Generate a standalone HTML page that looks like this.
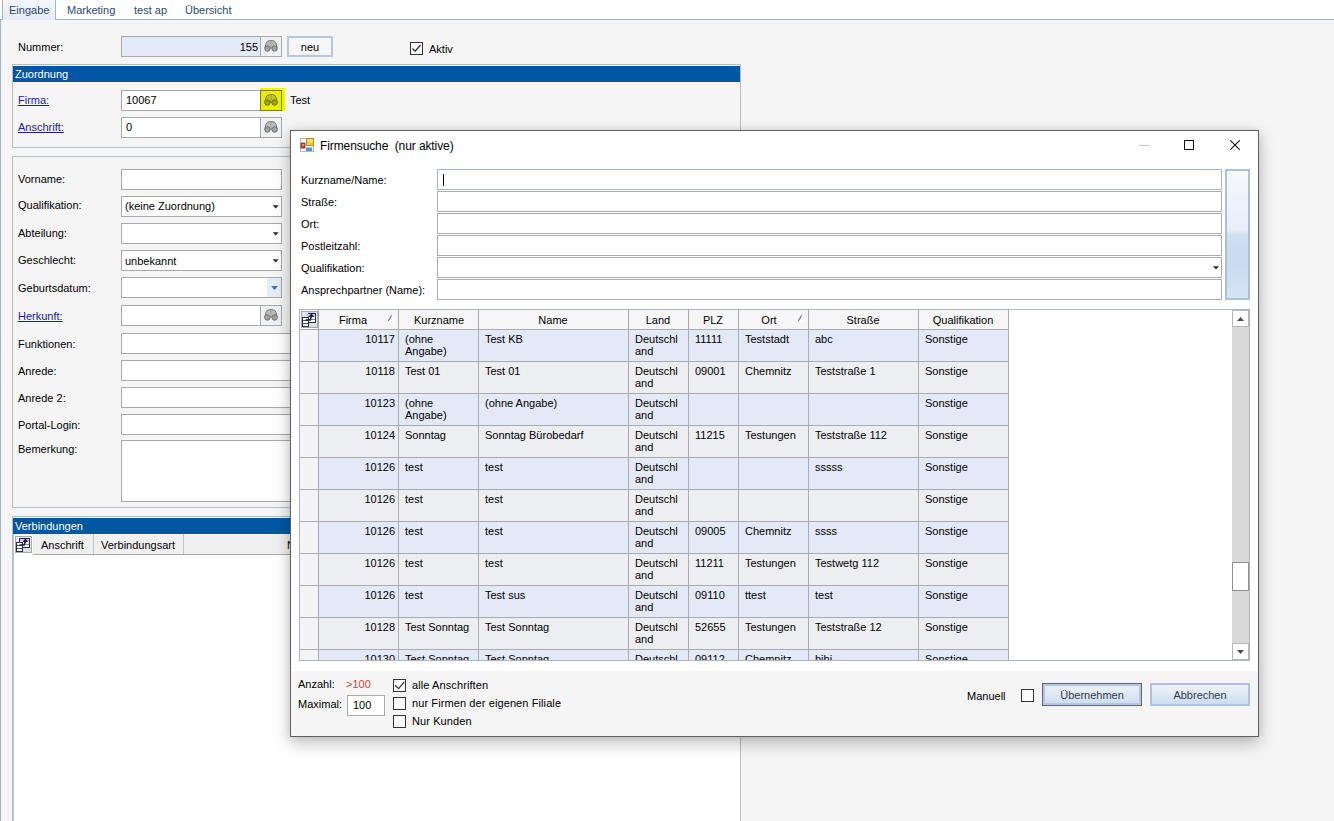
<!DOCTYPE html><html><head><meta charset="utf-8"><style>
html,body{margin:0;padding:0;}
svg{display:block;}
body{width:1334px;height:821px;overflow:hidden;position:relative;background:#f5f5f5;font-family:"Liberation Sans",sans-serif;}
.a{position:absolute;box-sizing:border-box;}
.t{position:absolute;font-size:11px;line-height:13px;white-space:pre;color:#000;}
.lnk{color:#1b1ba3;text-decoration:underline;}
.tab{color:#2b4877;}
.wh{color:#fff;}
.hd{color:#000;}
</style></head><body>
<div class="a" style="left:0px;top:0px;width:1334px;height:19px;background:#fff"></div>
<div class="a" style="left:0px;top:19px;width:1334px;height:1px;background:#9fb6cd"></div>
<div class="a" style="left:2px;top:0px;width:54px;height:20px;background:linear-gradient(#f3f7fc,#e4ecf7);border:1px solid #9fb6cd;border-bottom:none;border-top:none"></div>
<div class="t tab" style="left:9px;top:4px;">Eingabe</div>
<div class="t tab" style="left:67px;top:4px;">Marketing</div>
<div class="t tab" style="left:134px;top:4px;">test ap</div>
<div class="t tab" style="left:185px;top:4px;">Übersicht</div>
<div class="a" style="left:0px;top:20px;width:1px;height:801px;background:#a3b3c9"></div>
<div class="t " style="left:18px;top:41px;">Nummer:</div>
<div class="a" style="left:121px;top:36px;width:161px;height:21px;background:#e3eaf7;border:1px solid #a9a9a9"></div>
<div class="a" style="left:260px;top:36px;width:22px;height:21px;background:#eef1f6;border:1px solid #a9a9a9"></div>
<div class="a" style="left:264px;top:40px;width:14px;height:12px"><svg width="14" height="12" viewBox="0 0 14 12"><path d="M0.9 8 L2 3.2 Q3 0.9 5.3 0.6 L8.7 0.6 Q11 0.9 12 3.2 L13.1 8 Z" fill="#bcbab6" stroke="#727272" stroke-width="0.9"/><path d="M7 0.8 V6.5" stroke="#a2a2a2" stroke-width="1"/><circle cx="3.4" cy="8.5" r="2.7" fill="#a2a2a2" stroke="#727272" stroke-width="1"/><circle cx="10.6" cy="8.5" r="2.7" fill="#a2a2a2" stroke="#727272" stroke-width="1"/></svg></div>
<div class="t " style="right:1076px;top:41px;">155</div>
<div class="a" style="left:287px;top:36px;width:46px;height:21px;background:#f5f6f8;border:2px solid #b8c8dc"></div>
<div class="t " style="left:210.0px;width:200px;text-align:center;top:41px;">neu</div>
<div class="a" style="left:410px;top:42px;width:13px;height:13px;background:#fcfcfc;border:1px solid #333"></div>
<svg class="a" style="left:411px;top:43px" width="11" height="11" viewBox="0 0 11 11"><path d="M1.5 5.5 L4.2 8.2 L9.5 2" fill="none" stroke="#333" stroke-width="1.3"/></svg>
<div class="t " style="left:429px;top:43px;">Aktiv</div>
<div class="a" style="left:12px;top:64px;width:729px;height:84px;border:1px solid #b4bcc6"></div>
<div class="a" style="left:13px;top:66px;width:727px;height:16px;background:#0257a5"></div>
<div class="t wh" style="left:15px;top:68px;">Zuordnung</div>
<div class="t lnk" style="left:18px;top:94px;">Firma:</div>
<div class="a" style="left:121px;top:90px;width:161px;height:21px;background:#fff;border:1px solid #a9a9a9"></div>
<div class="a" style="left:260px;top:88px;width:25px;height:23px;background:#f0f400"></div>
<div class="a" style="left:260px;top:90px;width:22px;height:21px;background:#e8ee00;border:1px solid #7a7e10"></div>
<div class="a" style="left:264px;top:94px;width:14px;height:12px"><svg width="14" height="12" viewBox="0 0 14 12"><path d="M0.9 8 L2 3.2 Q3 0.9 5.3 0.6 L8.7 0.6 Q11 0.9 12 3.2 L13.1 8 Z" fill="#c0c428" stroke="#6e6e14" stroke-width="0.9"/><path d="M7 0.8 V6.5" stroke="#a4a418" stroke-width="1"/><circle cx="3.4" cy="8.5" r="2.7" fill="#a4a418" stroke="#6e6e14" stroke-width="1"/><circle cx="10.6" cy="8.5" r="2.7" fill="#a4a418" stroke="#6e6e14" stroke-width="1"/></svg></div>
<div class="t " style="left:126px;top:94px;">10067</div>
<div class="t " style="left:290px;top:94px;">Test</div>
<div class="t lnk" style="left:18px;top:121px;">Anschrift:</div>
<div class="a" style="left:121px;top:117px;width:161px;height:21px;background:#fff;border:1px solid #a9a9a9"></div>
<div class="a" style="left:260px;top:117px;width:22px;height:21px;background:#eef1f6;border:1px solid #a9a9a9"></div>
<div class="a" style="left:264px;top:121px;width:14px;height:12px"><svg width="14" height="12" viewBox="0 0 14 12"><path d="M0.9 8 L2 3.2 Q3 0.9 5.3 0.6 L8.7 0.6 Q11 0.9 12 3.2 L13.1 8 Z" fill="#bcbab6" stroke="#727272" stroke-width="0.9"/><path d="M7 0.8 V6.5" stroke="#a2a2a2" stroke-width="1"/><circle cx="3.4" cy="8.5" r="2.7" fill="#a2a2a2" stroke="#727272" stroke-width="1"/><circle cx="10.6" cy="8.5" r="2.7" fill="#a2a2a2" stroke="#727272" stroke-width="1"/></svg></div>
<div class="t " style="left:126px;top:121px;">0</div>
<div class="a" style="left:12px;top:156px;width:729px;height:352px;border:1px solid #b4bcc6"></div>
<div class="t " style="left:18px;top:173px;">Vorname:</div>
<div class="a" style="left:121px;top:169px;width:161px;height:21px;background:#fff;border:1px solid #a9a9a9"></div>
<div class="t " style="left:18px;top:199px;">Qualifikation:</div>
<div class="a" style="left:121px;top:196px;width:161px;height:21px;background:#fff;border:1px solid #a9a9a9"></div>
<div class="t " style="left:125px;top:200px;">(keine Zuordnung)</div>
<svg class="a" style="left:272px;top:205px" width="8" height="4" viewBox="0 0 8 4"><path d="M0.7 0.2 H6.7 L3.7 3.6 Z" fill="#2a2a2a"/></svg>
<div class="t " style="left:18px;top:227px;">Abteilung:</div>
<div class="a" style="left:121px;top:223px;width:161px;height:21px;background:#fff;border:1px solid #a9a9a9"></div>
<svg class="a" style="left:272px;top:232px" width="8" height="4" viewBox="0 0 8 4"><path d="M0.7 0.2 H6.7 L3.7 3.6 Z" fill="#2a2a2a"/></svg>
<div class="t " style="left:18px;top:254px;">Geschlecht:</div>
<div class="a" style="left:121px;top:250px;width:161px;height:21px;background:#fff;border:1px solid #a9a9a9"></div>
<div class="t " style="left:125px;top:255px;">unbekannt</div>
<svg class="a" style="left:272px;top:259px" width="8" height="4" viewBox="0 0 8 4"><path d="M0.7 0.2 H6.7 L3.7 3.6 Z" fill="#2a2a2a"/></svg>
<div class="t " style="left:18px;top:282px;">Geburtsdatum:</div>
<div class="a" style="left:121px;top:277px;width:161px;height:21px;background:#fff;border:1px solid #a9a9a9"></div>
<div class="a" style="left:267px;top:278px;width:14px;height:19px;background:#e4ecf7"></div>
<svg class="a" style="left:271px;top:286px" width="7" height="4" viewBox="0 0 7 4"><path d="M0 0 H7 L3.5 4 Z" fill="#4a72b0"/></svg>
<div class="t lnk" style="left:18px;top:310px;">Herkunft:</div>
<div class="a" style="left:121px;top:305px;width:161px;height:21px;background:#fff;border:1px solid #a9a9a9"></div>
<div class="a" style="left:260px;top:305px;width:22px;height:21px;background:#eef1f6;border:1px solid #a9a9a9"></div>
<div class="a" style="left:264px;top:309px;width:14px;height:12px"><svg width="14" height="12" viewBox="0 0 14 12"><path d="M0.9 8 L2 3.2 Q3 0.9 5.3 0.6 L8.7 0.6 Q11 0.9 12 3.2 L13.1 8 Z" fill="#bcbab6" stroke="#727272" stroke-width="0.9"/><path d="M7 0.8 V6.5" stroke="#a2a2a2" stroke-width="1"/><circle cx="3.4" cy="8.5" r="2.7" fill="#a2a2a2" stroke="#727272" stroke-width="1"/><circle cx="10.6" cy="8.5" r="2.7" fill="#a2a2a2" stroke="#727272" stroke-width="1"/></svg></div>
<div class="t " style="left:18px;top:338px;">Funktionen:</div>
<div class="a" style="left:121px;top:333px;width:400px;height:21px;background:#fff;border:1px solid #a9a9a9"></div>
<div class="t " style="left:18px;top:365px;">Anrede:</div>
<div class="a" style="left:121px;top:360px;width:400px;height:21px;background:#fff;border:1px solid #a9a9a9"></div>
<div class="t " style="left:18px;top:392px;">Anrede 2:</div>
<div class="a" style="left:121px;top:387px;width:400px;height:21px;background:#fff;border:1px solid #a9a9a9"></div>
<div class="t " style="left:18px;top:419px;">Portal-Login:</div>
<div class="a" style="left:121px;top:414px;width:400px;height:21px;background:#fff;border:1px solid #a9a9a9"></div>
<div class="t " style="left:18px;top:443px;">Bemerkung:</div>
<div class="a" style="left:121px;top:440px;width:400px;height:62px;background:#fff;border:1px solid #a9a9a9"></div>
<div class="a" style="left:12px;top:516px;width:729px;height:305px;border:1px solid #b4bcc6;border-bottom:none"></div>
<div class="a" style="left:13px;top:518px;width:727px;height:16px;background:#0257a5"></div>
<div class="t wh" style="left:15px;top:520px;">Verbindungen</div>
<div class="a" style="left:13px;top:534px;width:727px;height:287px;background:#fff;border-left:1px solid #b8c4d0"></div>
<div class="a" style="left:33px;top:534px;width:707px;height:21px;background:#f0f0f0;border-bottom:1px solid #a9a9a9"></div>
<div class="a" style="left:93px;top:534px;width:1px;height:20px;background:#c4c4c4"></div>
<div class="a" style="left:183px;top:534px;width:1px;height:20px;background:#c4c4c4"></div>
<div class="t " style="left:41px;top:539px;">Anschrift</div>
<div class="t " style="left:101px;top:539px;">Verbindungsart</div>
<div class="t " style="left:287px;top:539px;">N</div>
<div class="a" style="left:15px;top:536px;width:17px;height:17px"><svg width="17" height="17" viewBox="0 0 17 17"><rect x="0.5" y="0.5" width="16" height="16" fill="#ededf5" stroke="#a8a8a8"/><rect x="4.5" y="2.5" width="10" height="9" fill="#fff" stroke="#2a2a50"/><rect x="5" y="3" width="9" height="2.5" fill="#c8c8e6"/><path d="M8 8.5 H14" stroke="#8080a8"/><rect x="8" y="12" width="8" height="4" fill="#dedede"/><rect x="1.5" y="6.5" width="6" height="9" fill="#fff" stroke="#2a2a50"/><path d="M2 9.5 H7 M2 12.5 H7" stroke="#50507a"/><path d="M4.5 9 H9.2 L10.5 5" fill="none" stroke="#1e1e44" stroke-width="1.6"/><path d="M7.6 6 L10.4 2.2 L13.2 6 Z" fill="#1e1e44"/></svg></div>
<div class="a" style="left:290px;top:130px;width:969px;height:607px;background:#fff;border:1px solid #606060;box-shadow:0 6px 16px rgba(0,0,0,0.26),0 0 8px rgba(0,0,0,0.08)"></div>
<div class="a" style="left:291px;top:671px;width:967px;height:65px;background:#f5f5f5"></div>
<svg class="a" style="left:300px;top:138px" width="14" height="14" viewBox="0 0 14 14">
<rect x="0.5" y="0.5" width="13" height="13" fill="#fff" stroke="#bab6ae"/>
<rect x="6.5" y="0.5" width="7" height="7" fill="#f0cc3c" stroke="#b09830" stroke-width="1"/>
<rect x="7.5" y="1.5" width="5" height="2.5" fill="#f8e27a"/>
<rect x="1" y="5" width="4" height="5" fill="#c04040" stroke="#8a3030" stroke-width="0.8"/>
<rect x="2" y="6" width="2" height="2" fill="#e88080"/>
<rect x="6" y="9.5" width="6" height="3.5" fill="#5a90d8"/>
</svg>
<div class="t " style="left:320px;top:140px;font-size:12px;letter-spacing:-0.1px">Firmensuche  (nur aktive)</div>
<div class="a" style="left:1139px;top:145px;width:11px;height:1px;background:#c8c8c8"></div>
<div class="a" style="left:1184px;top:140px;width:10px;height:10px;border:1px solid #111"></div>
<svg class="a" style="left:1230px;top:140px" width="10" height="10" viewBox="0 0 10 10"><path d="M0.3 0.3 L9.7 9.7 M9.7 0.3 L0.3 9.7" stroke="#111" stroke-width="1.1"/></svg>
<div class="t " style="left:301px;top:174px;">Kurzname/Name:</div>
<div class="a" style="left:437px;top:169px;width:785px;height:21px;background:#fff;border:1px solid #a3b8d6"></div>
<div class="t " style="left:301px;top:196px;">Straße:</div>
<div class="a" style="left:437px;top:191px;width:785px;height:21px;background:#fff;border:1px solid #ababab"></div>
<div class="t " style="left:301px;top:218px;">Ort:</div>
<div class="a" style="left:437px;top:213px;width:785px;height:21px;background:#fff;border:1px solid #ababab"></div>
<div class="t " style="left:301px;top:240px;">Postleitzahl:</div>
<div class="a" style="left:437px;top:235px;width:785px;height:21px;background:#fff;border:1px solid #ababab"></div>
<div class="t " style="left:301px;top:262px;">Qualifikation:</div>
<div class="a" style="left:437px;top:257px;width:785px;height:21px;background:#fff;border:1px solid #ababab"></div>
<svg class="a" style="left:1212px;top:266px" width="8" height="4" viewBox="0 0 8 4"><path d="M1 0.2 H7 L4 3.6 Z" fill="#2a2a2a"/></svg>
<div class="t " style="left:301px;top:284px;">Ansprechpartner (Name):</div>
<div class="a" style="left:437px;top:279px;width:785px;height:21px;background:#fff;border:1px solid #ababab"></div>
<div class="a" style="left:443px;top:174px;width:1px;height:12px;background:#000"></div>
<div class="a" style="left:1225px;top:169px;width:25px;height:131px;border:2px solid #a9bfdd;background:linear-gradient(#f6f9fd 0%,#e6eef9 47%,#d0dff2 50%,#c9dbf0 75%,#d6e5f4 100%)"></div>
<div class="a" style="left:299px;top:309px;width:951px;height:352px;background:#fff;border:1px solid #adb5bf"></div>
<div class="a" style="left:300px;top:310px;width:932px;height:350px;overflow:hidden">
<div class="a" style="left:0px;top:0px;width:709px;height:19px;background:#f6f6f6"></div>
<div class="a" style="left:0px;top:19px;width:709px;height:1px;background:#a8abb0"></div>
<div class="a" style="left:18px;top:0px;width:1px;height:19px;background:#a8a8a8"></div>
<div class="a" style="left:98px;top:0px;width:1px;height:19px;background:#a8a8a8"></div>
<div class="a" style="left:178px;top:0px;width:1px;height:19px;background:#a8a8a8"></div>
<div class="a" style="left:328px;top:0px;width:1px;height:19px;background:#a8a8a8"></div>
<div class="a" style="left:388px;top:0px;width:1px;height:19px;background:#a8a8a8"></div>
<div class="a" style="left:438px;top:0px;width:1px;height:19px;background:#a8a8a8"></div>
<div class="a" style="left:508px;top:0px;width:1px;height:19px;background:#a8a8a8"></div>
<div class="a" style="left:618px;top:0px;width:1px;height:19px;background:#a8a8a8"></div>
<div class="a" style="left:708px;top:0px;width:1px;height:19px;background:#a8a8a8"></div>
<div class="t" style="left:-7px;width:120px;text-align:center;top:4px;">Firma</div>
<div class="t" style="left:79px;width:120px;text-align:center;top:4px;">Kurzname</div>
<div class="t" style="left:193px;width:120px;text-align:center;top:4px;">Name</div>
<div class="t" style="left:298px;width:120px;text-align:center;top:4px;">Land</div>
<div class="t" style="left:353px;width:120px;text-align:center;top:4px;">PLZ</div>
<div class="t" style="left:409px;width:120px;text-align:center;top:4px;">Ort</div>
<div class="t" style="left:503px;width:120px;text-align:center;top:4px;">Straße</div>
<div class="t" style="left:603px;width:120px;text-align:center;top:4px;">Qualifikation</div>
<svg class="a" style="left:87px;top:4px" width="8" height="8" viewBox="0 0 8 8"><path d="M5 1.5 L7.5 7 M1.5 7 H7.5" stroke="#ffffff" stroke-width="1"/><path d="M1.3 7 L4.6 1.3" stroke="#7a7a7a" stroke-width="1.2"/></svg>
<svg class="a" style="left:497px;top:4px" width="8" height="8" viewBox="0 0 8 8"><path d="M5 1.5 L7.5 7 M1.5 7 H7.5" stroke="#ffffff" stroke-width="1"/><path d="M1.3 7 L4.6 1.3" stroke="#7a7a7a" stroke-width="1.2"/></svg>
<div class="a" style="left:19px;top:20px;width:689px;height:31px;background:#e3e9f7"></div>
<div class="a" style="left:0px;top:20px;width:18px;height:31px;background:#f4f4f6"></div>
<div class="a" style="left:0px;top:51px;width:709px;height:1px;background:#a8abb0"></div>
<div class="a" style="left:18px;top:20px;width:1px;height:31px;background:#a8abb0"></div>
<div class="a" style="left:98px;top:20px;width:1px;height:31px;background:#a8abb0"></div>
<div class="a" style="left:178px;top:20px;width:1px;height:31px;background:#a8abb0"></div>
<div class="a" style="left:328px;top:20px;width:1px;height:31px;background:#a8abb0"></div>
<div class="a" style="left:388px;top:20px;width:1px;height:31px;background:#a8abb0"></div>
<div class="a" style="left:438px;top:20px;width:1px;height:31px;background:#a8abb0"></div>
<div class="a" style="left:508px;top:20px;width:1px;height:31px;background:#a8abb0"></div>
<div class="a" style="left:618px;top:20px;width:1px;height:31px;background:#a8abb0"></div>
<div class="a" style="left:708px;top:20px;width:1px;height:31px;background:#a8abb0"></div>
<div class="t" style="left:-5px;width:100px;text-align:right;top:23px;">10117</div>
<div class="t" style="left:105px;top:23px;">(ohne</div>
<div class="t" style="left:105px;top:35px;">Angabe)</div>
<div class="t" style="left:185px;top:23px;">Test KB</div>
<div class="t" style="left:335px;top:23px;">Deutschl</div>
<div class="t" style="left:335px;top:35px;">and</div>
<div class="t" style="left:395px;top:23px;">11111</div>
<div class="t" style="left:445px;top:23px;">Teststadt</div>
<div class="t" style="left:515px;top:23px;">abc</div>
<div class="t" style="left:625px;top:23px;">Sonstige</div>
<div class="a" style="left:19px;top:52px;width:689px;height:31px;background:#eceef1"></div>
<div class="a" style="left:0px;top:52px;width:18px;height:31px;background:#f4f4f6"></div>
<div class="a" style="left:0px;top:83px;width:709px;height:1px;background:#a8abb0"></div>
<div class="a" style="left:18px;top:52px;width:1px;height:31px;background:#a8abb0"></div>
<div class="a" style="left:98px;top:52px;width:1px;height:31px;background:#a8abb0"></div>
<div class="a" style="left:178px;top:52px;width:1px;height:31px;background:#a8abb0"></div>
<div class="a" style="left:328px;top:52px;width:1px;height:31px;background:#a8abb0"></div>
<div class="a" style="left:388px;top:52px;width:1px;height:31px;background:#a8abb0"></div>
<div class="a" style="left:438px;top:52px;width:1px;height:31px;background:#a8abb0"></div>
<div class="a" style="left:508px;top:52px;width:1px;height:31px;background:#a8abb0"></div>
<div class="a" style="left:618px;top:52px;width:1px;height:31px;background:#a8abb0"></div>
<div class="a" style="left:708px;top:52px;width:1px;height:31px;background:#a8abb0"></div>
<div class="t" style="left:-5px;width:100px;text-align:right;top:55px;">10118</div>
<div class="t" style="left:105px;top:55px;">Test 01</div>
<div class="t" style="left:185px;top:55px;">Test 01</div>
<div class="t" style="left:335px;top:55px;">Deutschl</div>
<div class="t" style="left:335px;top:67px;">and</div>
<div class="t" style="left:395px;top:55px;">09001</div>
<div class="t" style="left:445px;top:55px;">Chemnitz</div>
<div class="t" style="left:515px;top:55px;">Teststraße 1</div>
<div class="t" style="left:625px;top:55px;">Sonstige</div>
<div class="a" style="left:19px;top:84px;width:689px;height:31px;background:#e3e9f7"></div>
<div class="a" style="left:0px;top:84px;width:18px;height:31px;background:#f4f4f6"></div>
<div class="a" style="left:0px;top:115px;width:709px;height:1px;background:#a8abb0"></div>
<div class="a" style="left:18px;top:84px;width:1px;height:31px;background:#a8abb0"></div>
<div class="a" style="left:98px;top:84px;width:1px;height:31px;background:#a8abb0"></div>
<div class="a" style="left:178px;top:84px;width:1px;height:31px;background:#a8abb0"></div>
<div class="a" style="left:328px;top:84px;width:1px;height:31px;background:#a8abb0"></div>
<div class="a" style="left:388px;top:84px;width:1px;height:31px;background:#a8abb0"></div>
<div class="a" style="left:438px;top:84px;width:1px;height:31px;background:#a8abb0"></div>
<div class="a" style="left:508px;top:84px;width:1px;height:31px;background:#a8abb0"></div>
<div class="a" style="left:618px;top:84px;width:1px;height:31px;background:#a8abb0"></div>
<div class="a" style="left:708px;top:84px;width:1px;height:31px;background:#a8abb0"></div>
<div class="t" style="left:-5px;width:100px;text-align:right;top:87px;">10123</div>
<div class="t" style="left:105px;top:87px;">(ohne</div>
<div class="t" style="left:105px;top:99px;">Angabe)</div>
<div class="t" style="left:185px;top:87px;">(ohne Angabe)</div>
<div class="t" style="left:335px;top:87px;">Deutschl</div>
<div class="t" style="left:335px;top:99px;">and</div>
<div class="t" style="left:625px;top:87px;">Sonstige</div>
<div class="a" style="left:19px;top:116px;width:689px;height:31px;background:#eceef1"></div>
<div class="a" style="left:0px;top:116px;width:18px;height:31px;background:#f4f4f6"></div>
<div class="a" style="left:0px;top:147px;width:709px;height:1px;background:#a8abb0"></div>
<div class="a" style="left:18px;top:116px;width:1px;height:31px;background:#a8abb0"></div>
<div class="a" style="left:98px;top:116px;width:1px;height:31px;background:#a8abb0"></div>
<div class="a" style="left:178px;top:116px;width:1px;height:31px;background:#a8abb0"></div>
<div class="a" style="left:328px;top:116px;width:1px;height:31px;background:#a8abb0"></div>
<div class="a" style="left:388px;top:116px;width:1px;height:31px;background:#a8abb0"></div>
<div class="a" style="left:438px;top:116px;width:1px;height:31px;background:#a8abb0"></div>
<div class="a" style="left:508px;top:116px;width:1px;height:31px;background:#a8abb0"></div>
<div class="a" style="left:618px;top:116px;width:1px;height:31px;background:#a8abb0"></div>
<div class="a" style="left:708px;top:116px;width:1px;height:31px;background:#a8abb0"></div>
<div class="t" style="left:-5px;width:100px;text-align:right;top:119px;">10124</div>
<div class="t" style="left:105px;top:119px;">Sonntag</div>
<div class="t" style="left:185px;top:119px;">Sonntag Bürobedarf</div>
<div class="t" style="left:335px;top:119px;">Deutschl</div>
<div class="t" style="left:335px;top:131px;">and</div>
<div class="t" style="left:395px;top:119px;">11215</div>
<div class="t" style="left:445px;top:119px;">Testungen</div>
<div class="t" style="left:515px;top:119px;">Teststraße 112</div>
<div class="t" style="left:625px;top:119px;">Sonstige</div>
<div class="a" style="left:19px;top:148px;width:689px;height:31px;background:#e3e9f7"></div>
<div class="a" style="left:0px;top:148px;width:18px;height:31px;background:#f4f4f6"></div>
<div class="a" style="left:0px;top:179px;width:709px;height:1px;background:#a8abb0"></div>
<div class="a" style="left:18px;top:148px;width:1px;height:31px;background:#a8abb0"></div>
<div class="a" style="left:98px;top:148px;width:1px;height:31px;background:#a8abb0"></div>
<div class="a" style="left:178px;top:148px;width:1px;height:31px;background:#a8abb0"></div>
<div class="a" style="left:328px;top:148px;width:1px;height:31px;background:#a8abb0"></div>
<div class="a" style="left:388px;top:148px;width:1px;height:31px;background:#a8abb0"></div>
<div class="a" style="left:438px;top:148px;width:1px;height:31px;background:#a8abb0"></div>
<div class="a" style="left:508px;top:148px;width:1px;height:31px;background:#a8abb0"></div>
<div class="a" style="left:618px;top:148px;width:1px;height:31px;background:#a8abb0"></div>
<div class="a" style="left:708px;top:148px;width:1px;height:31px;background:#a8abb0"></div>
<div class="t" style="left:-5px;width:100px;text-align:right;top:151px;">10126</div>
<div class="t" style="left:105px;top:151px;">test</div>
<div class="t" style="left:185px;top:151px;">test</div>
<div class="t" style="left:335px;top:151px;">Deutschl</div>
<div class="t" style="left:335px;top:163px;">and</div>
<div class="t" style="left:515px;top:151px;">sssss</div>
<div class="t" style="left:625px;top:151px;">Sonstige</div>
<div class="a" style="left:19px;top:180px;width:689px;height:31px;background:#eceef1"></div>
<div class="a" style="left:0px;top:180px;width:18px;height:31px;background:#f4f4f6"></div>
<div class="a" style="left:0px;top:211px;width:709px;height:1px;background:#a8abb0"></div>
<div class="a" style="left:18px;top:180px;width:1px;height:31px;background:#a8abb0"></div>
<div class="a" style="left:98px;top:180px;width:1px;height:31px;background:#a8abb0"></div>
<div class="a" style="left:178px;top:180px;width:1px;height:31px;background:#a8abb0"></div>
<div class="a" style="left:328px;top:180px;width:1px;height:31px;background:#a8abb0"></div>
<div class="a" style="left:388px;top:180px;width:1px;height:31px;background:#a8abb0"></div>
<div class="a" style="left:438px;top:180px;width:1px;height:31px;background:#a8abb0"></div>
<div class="a" style="left:508px;top:180px;width:1px;height:31px;background:#a8abb0"></div>
<div class="a" style="left:618px;top:180px;width:1px;height:31px;background:#a8abb0"></div>
<div class="a" style="left:708px;top:180px;width:1px;height:31px;background:#a8abb0"></div>
<div class="t" style="left:-5px;width:100px;text-align:right;top:183px;">10126</div>
<div class="t" style="left:105px;top:183px;">test</div>
<div class="t" style="left:185px;top:183px;">test</div>
<div class="t" style="left:335px;top:183px;">Deutschl</div>
<div class="t" style="left:335px;top:195px;">and</div>
<div class="t" style="left:625px;top:183px;">Sonstige</div>
<div class="a" style="left:19px;top:212px;width:689px;height:31px;background:#e3e9f7"></div>
<div class="a" style="left:0px;top:212px;width:18px;height:31px;background:#f4f4f6"></div>
<div class="a" style="left:0px;top:243px;width:709px;height:1px;background:#a8abb0"></div>
<div class="a" style="left:18px;top:212px;width:1px;height:31px;background:#a8abb0"></div>
<div class="a" style="left:98px;top:212px;width:1px;height:31px;background:#a8abb0"></div>
<div class="a" style="left:178px;top:212px;width:1px;height:31px;background:#a8abb0"></div>
<div class="a" style="left:328px;top:212px;width:1px;height:31px;background:#a8abb0"></div>
<div class="a" style="left:388px;top:212px;width:1px;height:31px;background:#a8abb0"></div>
<div class="a" style="left:438px;top:212px;width:1px;height:31px;background:#a8abb0"></div>
<div class="a" style="left:508px;top:212px;width:1px;height:31px;background:#a8abb0"></div>
<div class="a" style="left:618px;top:212px;width:1px;height:31px;background:#a8abb0"></div>
<div class="a" style="left:708px;top:212px;width:1px;height:31px;background:#a8abb0"></div>
<div class="t" style="left:-5px;width:100px;text-align:right;top:215px;">10126</div>
<div class="t" style="left:105px;top:215px;">test</div>
<div class="t" style="left:185px;top:215px;">test</div>
<div class="t" style="left:335px;top:215px;">Deutschl</div>
<div class="t" style="left:335px;top:227px;">and</div>
<div class="t" style="left:395px;top:215px;">09005</div>
<div class="t" style="left:445px;top:215px;">Chemnitz</div>
<div class="t" style="left:515px;top:215px;">ssss</div>
<div class="t" style="left:625px;top:215px;">Sonstige</div>
<div class="a" style="left:19px;top:244px;width:689px;height:31px;background:#eceef1"></div>
<div class="a" style="left:0px;top:244px;width:18px;height:31px;background:#f4f4f6"></div>
<div class="a" style="left:0px;top:275px;width:709px;height:1px;background:#a8abb0"></div>
<div class="a" style="left:18px;top:244px;width:1px;height:31px;background:#a8abb0"></div>
<div class="a" style="left:98px;top:244px;width:1px;height:31px;background:#a8abb0"></div>
<div class="a" style="left:178px;top:244px;width:1px;height:31px;background:#a8abb0"></div>
<div class="a" style="left:328px;top:244px;width:1px;height:31px;background:#a8abb0"></div>
<div class="a" style="left:388px;top:244px;width:1px;height:31px;background:#a8abb0"></div>
<div class="a" style="left:438px;top:244px;width:1px;height:31px;background:#a8abb0"></div>
<div class="a" style="left:508px;top:244px;width:1px;height:31px;background:#a8abb0"></div>
<div class="a" style="left:618px;top:244px;width:1px;height:31px;background:#a8abb0"></div>
<div class="a" style="left:708px;top:244px;width:1px;height:31px;background:#a8abb0"></div>
<div class="t" style="left:-5px;width:100px;text-align:right;top:247px;">10126</div>
<div class="t" style="left:105px;top:247px;">test</div>
<div class="t" style="left:185px;top:247px;">test</div>
<div class="t" style="left:335px;top:247px;">Deutschl</div>
<div class="t" style="left:335px;top:259px;">and</div>
<div class="t" style="left:395px;top:247px;">11211</div>
<div class="t" style="left:445px;top:247px;">Testungen</div>
<div class="t" style="left:515px;top:247px;">Testwetg 112</div>
<div class="t" style="left:625px;top:247px;">Sonstige</div>
<div class="a" style="left:19px;top:276px;width:689px;height:31px;background:#e3e9f7"></div>
<div class="a" style="left:0px;top:276px;width:18px;height:31px;background:#f4f4f6"></div>
<div class="a" style="left:0px;top:307px;width:709px;height:1px;background:#a8abb0"></div>
<div class="a" style="left:18px;top:276px;width:1px;height:31px;background:#a8abb0"></div>
<div class="a" style="left:98px;top:276px;width:1px;height:31px;background:#a8abb0"></div>
<div class="a" style="left:178px;top:276px;width:1px;height:31px;background:#a8abb0"></div>
<div class="a" style="left:328px;top:276px;width:1px;height:31px;background:#a8abb0"></div>
<div class="a" style="left:388px;top:276px;width:1px;height:31px;background:#a8abb0"></div>
<div class="a" style="left:438px;top:276px;width:1px;height:31px;background:#a8abb0"></div>
<div class="a" style="left:508px;top:276px;width:1px;height:31px;background:#a8abb0"></div>
<div class="a" style="left:618px;top:276px;width:1px;height:31px;background:#a8abb0"></div>
<div class="a" style="left:708px;top:276px;width:1px;height:31px;background:#a8abb0"></div>
<div class="t" style="left:-5px;width:100px;text-align:right;top:279px;">10126</div>
<div class="t" style="left:105px;top:279px;">test</div>
<div class="t" style="left:185px;top:279px;">Test sus</div>
<div class="t" style="left:335px;top:279px;">Deutschl</div>
<div class="t" style="left:335px;top:291px;">and</div>
<div class="t" style="left:395px;top:279px;">09110</div>
<div class="t" style="left:445px;top:279px;">ttest</div>
<div class="t" style="left:515px;top:279px;">test</div>
<div class="t" style="left:625px;top:279px;">Sonstige</div>
<div class="a" style="left:19px;top:308px;width:689px;height:31px;background:#eceef1"></div>
<div class="a" style="left:0px;top:308px;width:18px;height:31px;background:#f4f4f6"></div>
<div class="a" style="left:0px;top:339px;width:709px;height:1px;background:#a8abb0"></div>
<div class="a" style="left:18px;top:308px;width:1px;height:31px;background:#a8abb0"></div>
<div class="a" style="left:98px;top:308px;width:1px;height:31px;background:#a8abb0"></div>
<div class="a" style="left:178px;top:308px;width:1px;height:31px;background:#a8abb0"></div>
<div class="a" style="left:328px;top:308px;width:1px;height:31px;background:#a8abb0"></div>
<div class="a" style="left:388px;top:308px;width:1px;height:31px;background:#a8abb0"></div>
<div class="a" style="left:438px;top:308px;width:1px;height:31px;background:#a8abb0"></div>
<div class="a" style="left:508px;top:308px;width:1px;height:31px;background:#a8abb0"></div>
<div class="a" style="left:618px;top:308px;width:1px;height:31px;background:#a8abb0"></div>
<div class="a" style="left:708px;top:308px;width:1px;height:31px;background:#a8abb0"></div>
<div class="t" style="left:-5px;width:100px;text-align:right;top:311px;">10128</div>
<div class="t" style="left:105px;top:311px;">Test Sonntag</div>
<div class="t" style="left:185px;top:311px;">Test Sonntag</div>
<div class="t" style="left:335px;top:311px;">Deutschl</div>
<div class="t" style="left:335px;top:323px;">and</div>
<div class="t" style="left:395px;top:311px;">52655</div>
<div class="t" style="left:445px;top:311px;">Testungen</div>
<div class="t" style="left:515px;top:311px;">Teststraße 12</div>
<div class="t" style="left:625px;top:311px;">Sonstige</div>
<div class="a" style="left:19px;top:340px;width:689px;height:31px;background:#e3e9f7"></div>
<div class="a" style="left:0px;top:340px;width:18px;height:31px;background:#f4f4f6"></div>
<div class="a" style="left:0px;top:371px;width:709px;height:1px;background:#a8abb0"></div>
<div class="a" style="left:18px;top:340px;width:1px;height:31px;background:#a8abb0"></div>
<div class="a" style="left:98px;top:340px;width:1px;height:31px;background:#a8abb0"></div>
<div class="a" style="left:178px;top:340px;width:1px;height:31px;background:#a8abb0"></div>
<div class="a" style="left:328px;top:340px;width:1px;height:31px;background:#a8abb0"></div>
<div class="a" style="left:388px;top:340px;width:1px;height:31px;background:#a8abb0"></div>
<div class="a" style="left:438px;top:340px;width:1px;height:31px;background:#a8abb0"></div>
<div class="a" style="left:508px;top:340px;width:1px;height:31px;background:#a8abb0"></div>
<div class="a" style="left:618px;top:340px;width:1px;height:31px;background:#a8abb0"></div>
<div class="a" style="left:708px;top:340px;width:1px;height:31px;background:#a8abb0"></div>
<div class="t" style="left:-5px;width:100px;text-align:right;top:343px;">10130</div>
<div class="t" style="left:105px;top:343px;">Test Sonntag</div>
<div class="t" style="left:185px;top:343px;">Test Sonntag</div>
<div class="t" style="left:335px;top:343px;">Deutschl</div>
<div class="t" style="left:335px;top:355px;">and</div>
<div class="t" style="left:395px;top:343px;">09112</div>
<div class="t" style="left:445px;top:343px;">Chemnitz</div>
<div class="t" style="left:515px;top:343px;">hihi</div>
<div class="t" style="left:625px;top:343px;">Sonstige</div>
</div>
<div class="a" style="left:300px;top:310px;width:18px;height:19px;background:#fafafa"></div>
<div class="a" style="left:301px;top:311px;width:17px;height:17px"><svg width="17" height="17" viewBox="0 0 17 17"><rect x="0.5" y="0.5" width="16" height="16" fill="#ededf5" stroke="#a8a8a8"/><rect x="8" y="1" width="6" height="4" fill="#c8c8e6"/><rect x="1" y="1" width="7" height="5" fill="#e2e2f2"/><rect x="7.5" y="2.5" width="7" height="9" fill="#fff" stroke="#2a2a50"/><rect x="5" y="3" width="9" height="2.5" fill="#c8c8e6"/><path d="M8 8.5 H14" stroke="#8080a8"/><rect x="8" y="12" width="8" height="4" fill="#dedede"/><rect x="1.5" y="6.5" width="6" height="9" fill="#fff" stroke="#2a2a50"/><path d="M2 9.5 H7 M2 12.5 H7" stroke="#50507a"/><path d="M4.5 9 H9.2 L10.5 5" fill="none" stroke="#1e1e44" stroke-width="1.6"/><path d="M7.6 6 L10.4 2.2 L13.2 6 Z" fill="#1e1e44"/></svg></div>
<div class="a" style="left:1232px;top:310px;width:17px;height:350px;background:#d9d9d9"></div>
<div class="a" style="left:1232px;top:310px;width:17px;height:17px;background:#fff;border:1px solid #b8b8b8"></div>
<svg class="a" style="left:1237px;top:317px" width="7" height="4" viewBox="0 0 7 4"><path d="M0 4 H7 L3.5 0 Z" fill="#505050"/></svg>
<div class="a" style="left:1232px;top:643px;width:17px;height:17px;background:#fff;border:1px solid #b8b8b8"></div>
<svg class="a" style="left:1237px;top:650px" width="7" height="4" viewBox="0 0 7 4"><path d="M0 0 H7 L3.5 4 Z" fill="#505050"/></svg>
<div class="a" style="left:1232px;top:562px;width:17px;height:29px;background:#fff;border:1px solid #8e8e8e"></div>
<div class="t " style="left:298px;top:678px;">Anzahl:</div>
<div class="t " style="left:346px;top:678px;color:#e03c3c">&gt;100</div>
<div class="t " style="left:298px;top:698px;">Maximal:</div>
<div class="a" style="left:347px;top:695px;width:38px;height:21px;background:#fff;border:1px solid #ababab"></div>
<div class="t " style="left:353px;top:699px;">100</div>
<div class="a" style="left:393px;top:679px;width:13px;height:13px;background:#fafafa;border:1px solid #333"></div>
<div class="t " style="left:412px;top:679px;letter-spacing:0.1px">alle Anschriften</div>
<div class="a" style="left:393px;top:697px;width:13px;height:13px;background:#fafafa;border:1px solid #333"></div>
<div class="t " style="left:412px;top:697px;letter-spacing:0.1px">nur Firmen der eigenen Filiale</div>
<div class="a" style="left:393px;top:715px;width:13px;height:13px;background:#fafafa;border:1px solid #333"></div>
<div class="t " style="left:412px;top:715px;letter-spacing:0.1px">Nur Kunden</div>
<svg class="a" style="left:394px;top:680px" width="11" height="11" viewBox="0 0 11 11"><path d="M1 5.2 L4.6 8.6 L10.2 2" fill="none" stroke="#3a3a3a" stroke-width="1.2"/></svg>
<div class="t " style="left:967px;top:690px;">Manuell</div>
<div class="a" style="left:1021px;top:689px;width:13px;height:13px;background:#fafafa;border:1px solid #333"></div>
<div class="a" style="left:1042px;top:683px;width:100px;height:23px;border:1px solid #5f6670;box-shadow:inset 0 0 0 2px #b3c7e3;background:linear-gradient(#eef3fa,#dfe8f5 50%,#cddcef)"></div>
<div class="t " style="left:992.0px;width:200px;text-align:center;top:689px;color:#2f3b4c">Übernehmen</div>
<div class="a" style="left:1150px;top:683px;width:100px;height:23px;border:2px solid #aec3df;background:linear-gradient(#eef3fa,#dfe8f5 50%,#cddcef)"></div>
<div class="t " style="left:1100.0px;width:200px;text-align:center;top:689px;color:#2f3b4c">Abbrechen</div>
</body></html>
